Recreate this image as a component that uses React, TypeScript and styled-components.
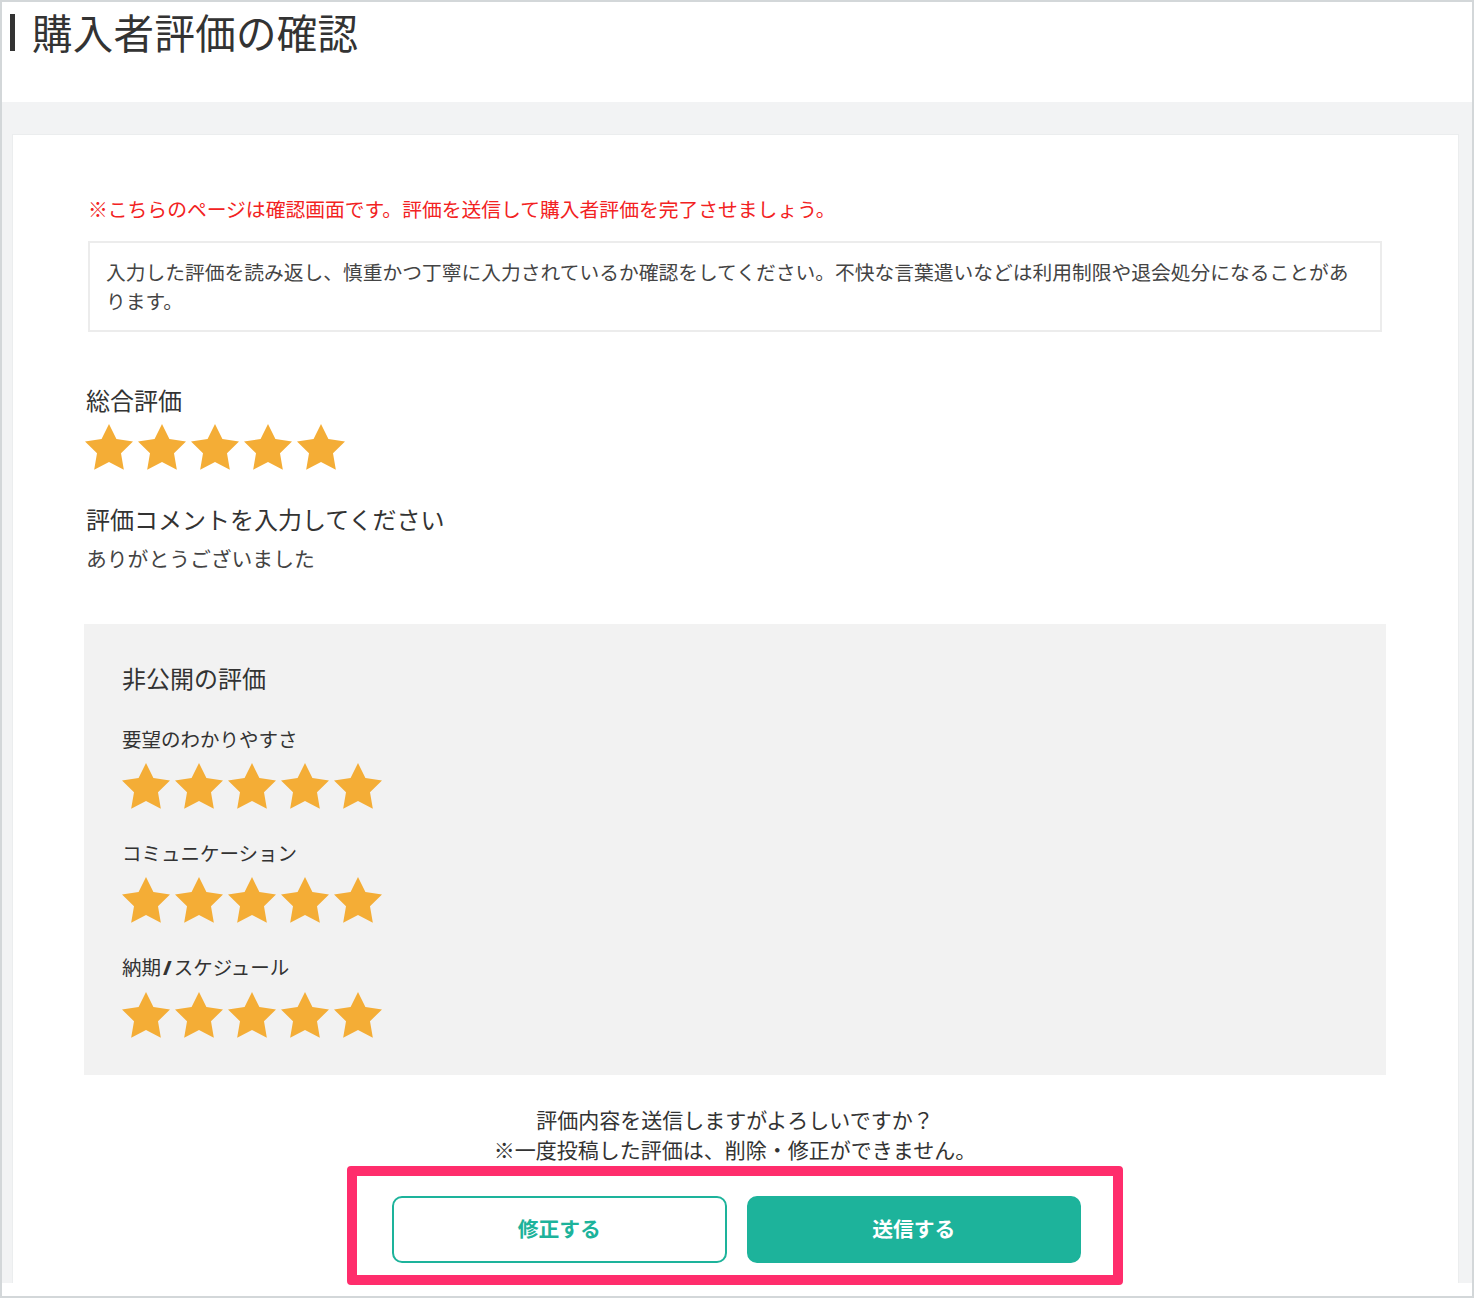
import React from 'react'
import styled, { createGlobalStyle } from 'styled-components'

const GlobalStyle = createGlobalStyle`
    html, body {
        margin: 0;
        padding: 0;
        background: #ffffff;
    }
    body {
        font-family: "Noto Sans CJK JP", "Noto Sans", sans-serif;
        color: #333333;
    }
    * {
        box-sizing: border-box;
    }
`

const Frame = styled.div`
    width: 1474px;
    height: 1298px;
    border: 2px solid #d3d7d9;
    background: #ffffff;
    display: flex;
    flex-direction: column;
    overflow: hidden;
`

const Header = styled.header`
    height: 100px;
    padding: 7px 8px 0;
    display: flex;
    align-items: flex-start;
`

const PageTitle = styled.h1`
    margin: 0;
    display: flex;
    align-items: center;
    font-size: 40.5px;
    font-weight: 400;
    line-height: 46px;
    color: #333333;
    letter-spacing: 0.3px;

    &::before {
        content: '';
        display: block;
        width: 5px;
        height: 37px;
        background: #333333;
        margin-right: 17px;
    }
`

const Body = styled.main`
    flex: none;
    height: 1181px;
    background: #f2f3f4;
    padding: 32px 13px 0 10px;
    display: flex;
    flex-direction: column;
`

const Card = styled.section`
    flex: 1;
    background: #ffffff;
    border: 1px solid #ebedee;
    border-bottom: none;
    padding: 59px 76px 0 75px;
    display: flex;
    flex-direction: column;
`

const Caution = styled.p`
    margin: 0;
    font-size: 19.8px;
    line-height: 30px;
    color: #f22222;
`

const NoticeBox = styled.div`
    margin-top: 17px;
    border: 2px solid #ececec;
    padding: 14px 14px 15px 16px;
    font-size: 19.75px;
    line-height: 29px;
    color: #444444;
`

const SectionTitle = styled.h2<{ $top: number }>`
    margin: ${({ $top }) => $top}px 0 0 -2px;
    font-size: 24px;
    font-weight: 400;
    line-height: 32px;
    color: #333333;
`

const CommentText = styled.p`
    margin: 8px 0 0 -2px;
    font-size: 20.8px;
    line-height: 30px;
    color: #444444;
`

const StarRow = styled.div<{ $top: number; $shift?: number }>`
    display: flex;
    gap: 5px;
    margin-top: ${({ $top }) => $top}px;
    margin-left: ${({ $shift = 0 }) => $shift}px;
`

const StarIcon = styled.svg`
    width: 48px;
    height: 46px;
    fill: #f4ad36;
    display: block;
`

const PrivateBox = styled.div`
    margin: 51px -4px 0;
    background: #f2f2f2;
    padding: 40px 38px 37px;
    display: flex;
    flex-direction: column;
`

const PrivateTitle = styled.h3`
    margin: 0;
    font-size: 24px;
    font-weight: 400;
    line-height: 28px;
    color: #333333;
`

const RatingItem = styled.div<{ $first?: boolean }>`
    margin-top: ${({ $first }) => ($first ? 33 : 30)}px;
    display: flex;
    flex-direction: column;
`

const RatingLabel = styled.div`
    font-size: 19.5px;
    line-height: 28px;
    color: #333333;

    b {
        font-family: "Noto Sans", sans-serif;
        font-weight: 900;
        margin: 0 2px;
    }
`

const ConfirmText = styled.p`
    margin: 29px 0 0;
    text-align: center;
    font-size: 21px;
    line-height: 30px;
    color: #333333;
`

const Highlight = styled.div`
    align-self: center;
    width: 776px;
    margin: 2px 0 -3px;
    border: 10px solid #ff2d6c;
    border-radius: 4px;
    background: #ffffff;
    padding: 20px 32px 12px 35px;
    display: flex;
    gap: 20px;
`

const ActionButton = styled.button<{ $primary?: boolean }>`
    flex: 1;
    height: 67px;
    padding: 0 0 4px;
    border-radius: 10px;
    border: 2px solid #1db39b;
    background: ${({ $primary }) => ($primary ? '#1db39b' : '#ffffff')};
    color: ${({ $primary }) => ($primary ? '#ffffff' : '#1db39b')};
    font-family: "Noto Sans CJK JP", sans-serif;
    font-size: 20.8px;
    font-weight: 700;
    cursor: pointer;
`

const Star = () => (
    <StarIcon viewBox="2 2 20 19.1">
        <polygon points="12,2 15.09,8.26 22,9.27 17,14.14 18.18,21.02 12,17.77 5.82,21.02 7,14.14 2,9.27 8.91,8.26" />
    </StarIcon>
)

const Stars = ({ count, top, shift }: { count: number; top: number; shift?: number }) => (
    <StarRow $top={top} $shift={shift}>
        {Array.from({ length: count }).map((_, i) => (
            <Star key={i} />
        ))}
    </StarRow>
)

const privateRatings: { label: React.ReactNode; score: number }[] = [
    { label: '要望のわかりやすさ', score: 5 },
    { label: 'コミュニケーション', score: 5 },
    {
        label: (
            <>
                納期<b>/</b>スケジュール
            </>
        ),
        score: 5,
    },
]

const App = (): JSX.Element => {
    return (
        <>
            <GlobalStyle />
            <Frame>
                <Header>
                    <PageTitle>購入者評価の確認</PageTitle>
                </Header>
                <Body>
                    <Card>
                        <Caution>
                            ※こちらのページは確認画面です。評価を送信して購入者評価を完了させましょう。
                        </Caution>
                        <NoticeBox>
                            入力した評価を読み返し、慎重かつ丁寧に入力されているか確認をしてください。不快な言葉遣いなどは利用制限や退会処分になることがあります。
                        </NoticeBox>

                        <SectionTitle $top={52}>総合評価</SectionTitle>
                        <Stars count={5} top={8} shift={-3} />

                        <SectionTitle $top={33}>評価コメントを入力してください</SectionTitle>
                        <CommentText>ありがとうございました</CommentText>

                        <PrivateBox>
                            <PrivateTitle>非公開の評価</PrivateTitle>
                            {privateRatings.map((item, i) => (
                                <RatingItem key={i} $first={i === 0}>
                                    <RatingLabel>{item.label}</RatingLabel>
                                    <Stars count={item.score} top={10} />
                                </RatingItem>
                            ))}
                        </PrivateBox>

                        <ConfirmText>
                            評価内容を送信しますがよろしいですか？
                            <br />
                            ※一度投稿した評価は、削除・修正ができません。
                        </ConfirmText>

                        <Highlight>
                            <ActionButton>修正する</ActionButton>
                            <ActionButton $primary>送信する</ActionButton>
                        </Highlight>
                    </Card>
                </Body>
            </Frame>
        </>
    )
}

export default App
